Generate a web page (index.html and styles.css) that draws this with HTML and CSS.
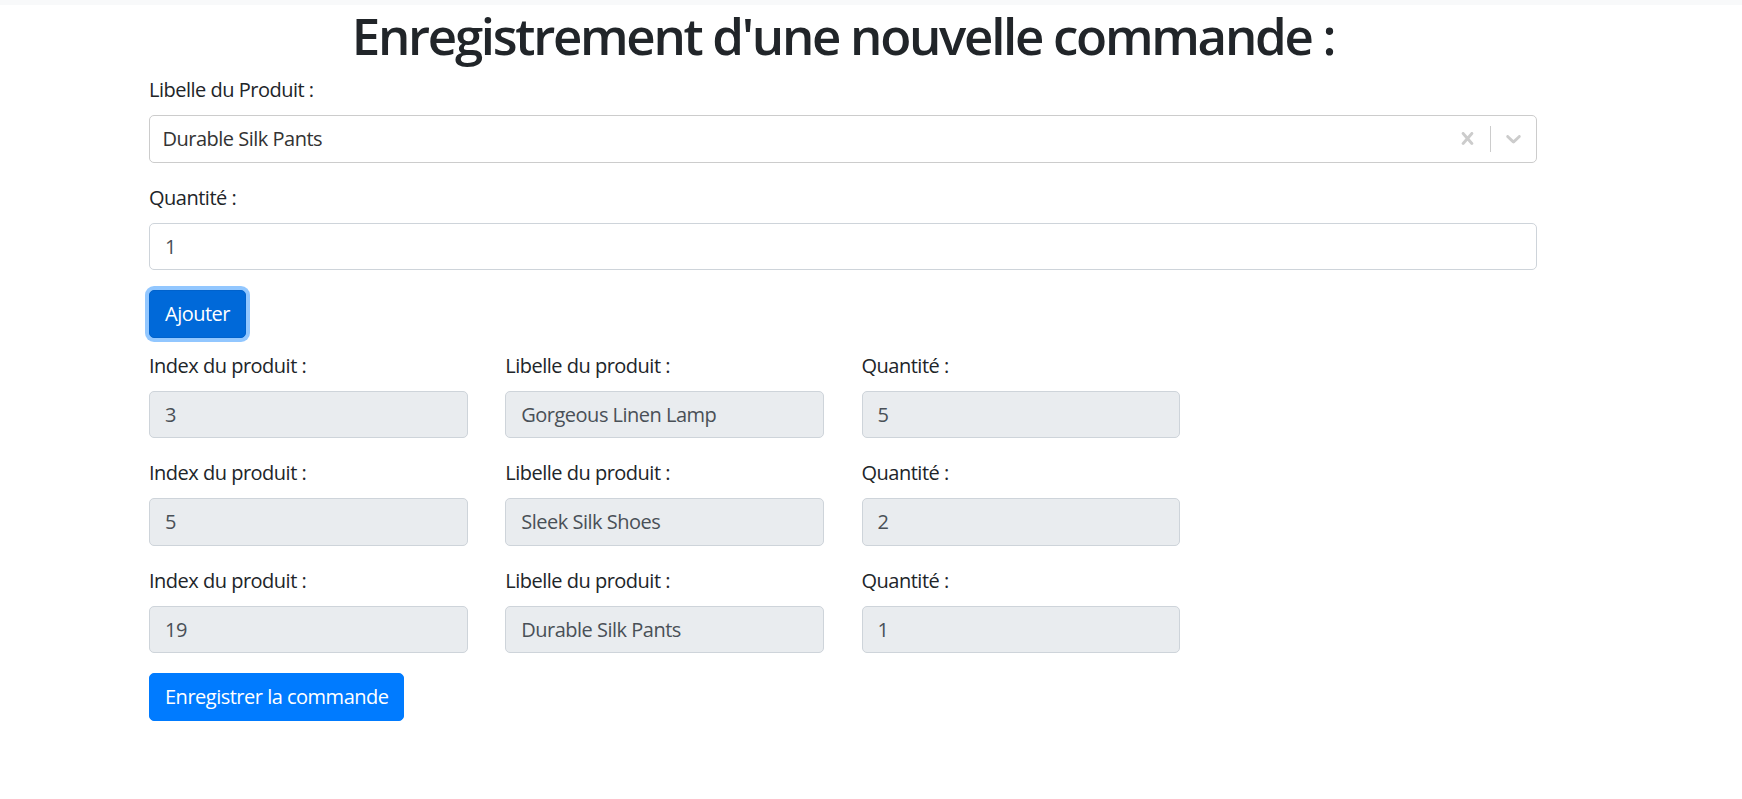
FILE: index.html
```html
<!DOCTYPE html>
<html lang="fr">
<head>
<meta charset="utf-8">
<title>Enregistrement d'une nouvelle commande</title>
<link rel="stylesheet" href="styles.css">
</head>
<body>
<div class="topbar"></div>
<div class="container">
  <h1 class="title">Enregistrement d'une nouvelle commande :</h1>
  <form class="order-form">
    <div class="form-group">
      <label class="label">Libelle du Produit :</label>
      <div class="select-control">
        <div class="select-value"><span class="single-value">Durable Silk Pants</span></div>
        <div class="select-indicators">
          <div class="indicator">
            <svg viewBox="0 0 20 20" width="25" height="25" aria-hidden="true"><path d="M14.348 14.849c-0.469 0.469-1.229 0.469-1.697 0l-2.651-3.030-2.651 3.029c-0.469 0.469-1.229 0.469-1.697 0-0.469-0.469-0.469-1.229 0-1.697l2.758-3.15-2.759-3.152c-0.469-0.469-0.469-1.228 0-1.697s1.228-0.469 1.697 0l2.652 3.031 2.651-3.031c0.469-0.469 1.228-0.469 1.697 0s0.469 1.229 0 1.697l-2.758 3.152 2.758 3.15c0.469 0.469 0.469 1.229 0 1.698z"/></svg>
          </div>
          <span class="separator"></span>
          <div class="indicator">
            <svg viewBox="0 0 20 20" width="25" height="25" aria-hidden="true"><path d="M4.516 7.548c0.436-0.446 1.043-0.481 1.576 0l3.908 3.747 3.908-3.747c0.533-0.481 1.141-0.446 1.574 0 0.436 0.445 0.408 1.197 0 1.615-0.406 0.418-4.695 4.502-4.695 4.502-0.217 0.223-0.502 0.335-0.787 0.335s-0.57-0.112-0.789-0.335c0 0-4.287-4.084-4.695-4.502s-0.436-1.170 0-1.615z"/></svg>
          </div>
        </div>
      </div>
    </div>
    <div class="form-group">
      <label class="label">Quantité :</label>
      <input class="form-control" type="text" value="1">
    </div>
    <button type="button" class="btn btn-focus">Ajouter</button>

    <div class="lines">
      <div class="line-row">
        <div class="form-group"><label class="label">Index du produit :</label><input class="form-control" type="text" value="3" disabled></div>
        <div class="form-group"><label class="label">Libelle du produit :</label><input class="form-control" type="text" value="Gorgeous Linen Lamp" disabled></div>
        <div class="form-group"><label class="label">Quantité :</label><input class="form-control" type="text" value="5" disabled></div>
      </div>
      <div class="line-row">
        <div class="form-group"><label class="label">Index du produit :</label><input class="form-control" type="text" value="5" disabled></div>
        <div class="form-group"><label class="label">Libelle du produit :</label><input class="form-control" type="text" value="Sleek Silk Shoes" disabled></div>
        <div class="form-group"><label class="label">Quantité :</label><input class="form-control" type="text" value="2" disabled></div>
      </div>
      <div class="line-row">
        <div class="form-group"><label class="label">Index du produit :</label><input class="form-control" type="text" value="19" disabled></div>
        <div class="form-group"><label class="label">Libelle du produit :</label><input class="form-control" type="text" value="Durable Silk Pants" disabled></div>
        <div class="form-group"><label class="label">Quantité :</label><input class="form-control" type="text" value="1" disabled></div>
      </div>
    </div>
    <button type="button" class="btn">Enregistrer la commande</button>
  </form>
</div>
</body>
</html>
```

FILE: styles.css
```css
* { box-sizing: border-box; }
html, body { margin: 0; padding: 0; background: #fff; }
body {
  font-family: "Open Sans", "Noto Sans", "DejaVu Sans", sans-serif;
  font-size: 20px;
  line-height: 30px;
  letter-spacing: -0.5px;
  color: #212529;
}
.topbar { height: 5px; background: #f8f9fa; }
.container { width: 1388px; margin-left: 149px; }
.title {
  margin: 0 0 10px;
  font-size: 51px;
  line-height: 60px;
  font-weight: 600;
  letter-spacing: -2.3px;
  text-align: center;
  color: #212529;
}
.order-form { margin: 0; }
.form-group { margin-bottom: 20px; display: flex; flex-direction: column; }
.label { display: block; margin-bottom: 10px; line-height: 30px; }
.form-control {
  display: block;
  width: 100%;
  height: 47.5px;
  padding: 7.5px 15px;
  font-family: inherit;
  font-size: 20px;
  line-height: 30px;
  letter-spacing: -0.5px;
  color: #495057;
  background: #fff;
  border: 1.25px solid #ced4da;
  border-radius: 5px;
  outline: none;
}
.form-control:disabled { background: #e9ecef; color: #495057; -webkit-text-fill-color: #495057; opacity: 1; }
.select-control {
  display: flex;
  align-items: center;
  justify-content: space-between;
  min-height: 47.5px;
  border: 1.25px solid #ccc;
  border-radius: 5px;
  background: #fff;
}
.select-value { flex: 1; padding: 2.5px 10px; display: flex; align-items: center; }
.single-value { margin: 0 2.5px; color: #333; }
.select-indicators { display: flex; align-items: stretch; align-self: stretch; }
.indicator { display: flex; align-items: center; padding: 10px; color: #ccc; }
.indicator svg { display: block; fill: currentColor; }
.separator { width: 1.25px; background: #ccc; margin: 10px 0; }
.btn {
  display: inline-block;
  height: 47.5px;
  padding: 7.5px 15px;
  font-family: inherit;
  font-size: 20px;
  line-height: 30px;
  letter-spacing: -0.5px;
  color: #fff;
  background: #007bff;
  border: 1.25px solid #007bff;
  border-radius: 5px;
  cursor: pointer;
}
.btn-focus {
  background: #0069d9;
  border-color: #0062cc;
  box-shadow: 0 0 0 4px rgba(38, 143, 255, 0.5);
}
.lines { margin-top: 13px; }
.line-row { display: grid; grid-template-columns: repeat(3, 318.75px); column-gap: 37.5px; }
```
